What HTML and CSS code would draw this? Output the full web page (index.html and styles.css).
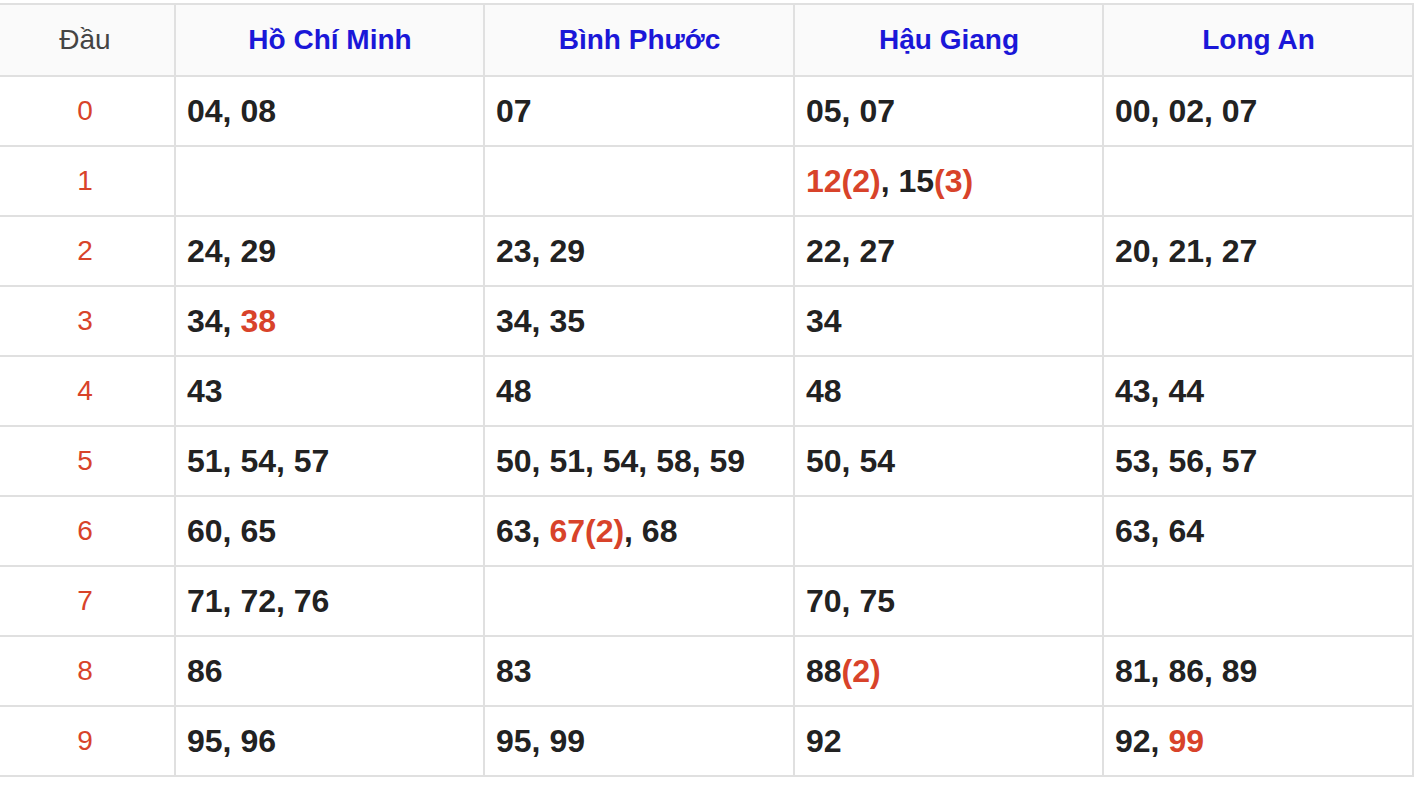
FILE: index.html
```html
<!DOCTYPE html>
<html lang="vi">
<head>
<meta charset="utf-8">
<title>Lô tô</title>
<link rel="stylesheet" href="styles.css">
</head>
<body>
<table class="loto">
  <colgroup>
    <col class="c-dau">
    <col class="c-prov">
    <col class="c-prov2">
    <col class="c-prov">
    <col class="c-prov2">
  </colgroup>
  <thead>
    <tr>
      <th class="h-dau">Đầu</th>
      <th><a class="prov">Hồ Chí Minh</a></th>
      <th><a class="prov">Bình Phước</a></th>
      <th><a class="prov">Hậu Giang</a></th>
      <th><a class="prov">Long An</a></th>
    </tr>
  </thead>
  <tbody>
    <tr><td class="dau">0</td><td>04, 08</td><td>07</td><td>05, 07</td><td>00, 02, 07</td></tr>
    <tr><td class="dau">1</td><td></td><td></td><td><span class="hl">12(2)</span>, 15<span class="hl">(3)</span></td><td></td></tr>
    <tr><td class="dau">2</td><td>24, 29</td><td>23, 29</td><td>22, 27</td><td>20, 21, 27</td></tr>
    <tr><td class="dau">3</td><td>34, <span class="hl">38</span></td><td>34, 35</td><td>34</td><td></td></tr>
    <tr><td class="dau">4</td><td>43</td><td>48</td><td>48</td><td>43, 44</td></tr>
    <tr><td class="dau">5</td><td>51, 54, 57</td><td>50, 51, 54, 58, 59</td><td>50, 54</td><td>53, 56, 57</td></tr>
    <tr><td class="dau">6</td><td>60, 65</td><td>63, <span class="hl">67(2)</span>, 68</td><td></td><td>63, 64</td></tr>
    <tr><td class="dau">7</td><td>71, 72, 76</td><td></td><td>70, 75</td><td></td></tr>
    <tr><td class="dau">8</td><td>86</td><td>83</td><td>88<span class="hl">(2)</span></td><td>81, 86, 89</td></tr>
    <tr><td class="dau">9</td><td>95, 96</td><td>95, 99</td><td>92</td><td>92, <span class="hl">99</span></td></tr>
  </tbody>
</table>
</body>
</html>
```
FILE: styles.css
```css
html, body {
  margin: 0;
  padding: 0;
  background: #ffffff;
}
body {
  padding-top: 3px;
  font-family: "Liberation Sans", Arial, Helvetica, sans-serif;
  overflow: hidden;
}
.loto {
  border-collapse: collapse;
  table-layout: fixed;
  width: 1416px;
  margin-left: -2px;
}
.c-dau { width: 176px; }
.c-prov { width: 309px; }
.c-prov2 { width: 310px; }
.loto th,
.loto td {
  border: 2px solid #e0e0e0;
  padding: 0 10px 0 11px;
  vertical-align: middle;
}
.loto th {
  background: #fafafa;
  height: 70px;
  font-size: 28px;
  font-weight: bold;
  text-align: center;
}
.loto th.h-dau {
  font-weight: normal;
  color: #444444;
  padding: 0 12px 0 8px;
}
.prov {
  color: #1a17d8;
  text-decoration: none;
}
.loto td {
  height: 68px;
  font-size: 32px;
  font-weight: bold;
  color: #222222;
  text-align: left;
}
.loto td.dau {
  font-size: 28px;
  font-weight: normal;
  color: #d8432a;
  text-align: center;
  padding: 0 12px 0 8px;
}
.hl {
  color: #d8432a;
}
```
